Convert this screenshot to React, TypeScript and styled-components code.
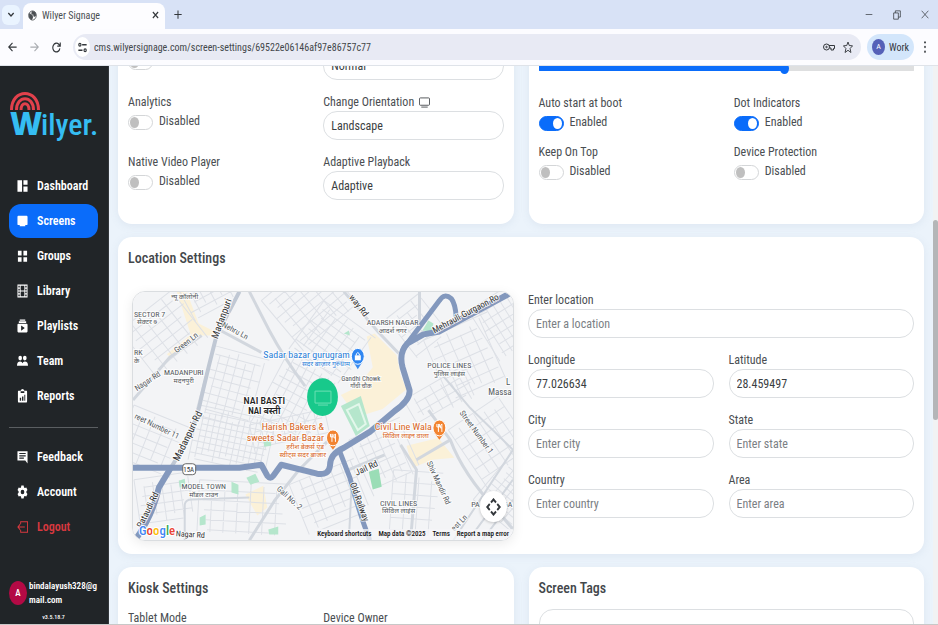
import React from "react";
import styled, { createGlobalStyle, css } from "styled-components";

const ui = `"Roboto Condensed", Nunito, Roboto, "Noto Sans", sans-serif`;
const blue = "#0a6cfa";

const Global = createGlobalStyle`
  * { box-sizing: border-box; }
  body { margin: 0; font-family: ${ui}; font-size: 12px; color: #4a4e52; background: #ebf3fb; }
  button, input, select { font: inherit; color: inherit; margin: 0; }
  a { color: inherit; text-decoration: none; }
`;

/* ---------- shell ---------- */
const Page = styled.div`
  display: flex;
  flex-direction: column;
  height: 100vh;
  overflow: hidden;
  border-bottom: 1px solid #c8c8c8;
`;
const Body = styled.div`
  display: flex;
  flex: 1;
  min-height: 0;
`;
const PlainButton = styled.button`
  display: inline-flex;
  align-items: center;
  justify-content: center;
  padding: 0;
  border: 0;
  background: none;
  color: #33373b;
`;

/* ---------- browser frame ---------- */
const TabStrip = styled.header`
  display: flex;
  align-items: center;
  height: 29px;
  flex: none;
  padding: 0 2px;
  background: #d8e2f6;
`;
const TabSearch = styled(PlainButton)`
  width: 18px;
  height: 20px;
  border-radius: 6px;
  background: #eaf4ff;
`;
const Tab = styled.div`
  display: flex;
  align-items: center;
  align-self: flex-end;
  gap: 5px;
  width: 142px;
  height: 26px;
  margin-left: 3px;
  padding: 0 6px 2px 5px;
  border-radius: 8px 8px 0 0;
  background: #fdfdff;
  font-size: 10px;
`;
const TabTitle = styled.span`
  flex: 1;
`;
const NewTab = styled(PlainButton)`
  width: 26px;
  height: 20px;
`;
const WindowButtons = styled.div`
  display: flex;
  gap: 13px;
  margin-left: auto;
  padding-right: 4px;
`;
const WindowButton = styled(PlainButton)`
  width: 15px;
  height: 16px;
`;
const Toolbar = styled.div`
  display: flex;
  align-items: center;
  height: 37px;
  flex: none;
  padding: 0 8px 0 4px;
  background: #fcfcff;
  border-bottom: 1px solid #dfe3e9;
`;
const ToolButton = styled(PlainButton)<{ $muted?: boolean }>`
  width: 16px;
  height: 20px;
  margin-right: 6px;
  color: ${(p) => (p.$muted ? "#a9acb1" : "#33373b")};
`;
const AddressBar = styled.div`
  display: flex;
  align-items: center;
  flex: 1;
  height: 26px;
  margin-left: 3px;
  padding: 0 8px 0 2px;
  border-radius: 13px;
  background: #e8eaf4;
`;
const SiteInfo = styled(PlainButton)`
  width: 15px;
  height: 20px;
  border-radius: 50%;
  background: #fff;
`;
const Url = styled.input`
  flex: 1;
  min-width: 0;
  padding: 0 4px;
  border: 0;
  background: none;
  font-size: 10px;
  color: #43474b;
`;
const BarIcons = styled.div`
  display: flex;
  gap: 8px;
`;
const Profile = styled(PlainButton)`
  gap: 4px;
  height: 26px;
  width: 47px;
  margin: 0 6px;
  border-radius: 13px;
  background: #d3e6fb;
  font-size: 10px;
`;
const ProfileDot = styled.span`
  width: 13px;
  height: 16px;
  border-radius: 50%;
  background: #5561b8;
  color: #fff;
  font-size: 8px;
  line-height: 16px;
`;

/* ---------- sidebar ---------- */
const Sidebar = styled.aside`
  display: flex;
  flex-direction: column;
  flex: none;
  width: 109px;
  padding: 24px 10px 0 9px;
  background: #212528;
  border-right: 1px solid #33373b;
  color: #fff;
`;
const Nav = styled.nav<{ $top?: boolean }>`
  display: flex;
  flex-direction: column;
  gap: 1px;
  margin-top: ${(p) => (p.$top ? 23 : 0)}px;
`;
const NavLink = styled.a<{ $active?: boolean; $danger?: boolean }>`
  display: flex;
  align-items: center;
  gap: 9px;
  height: 34px;
  padding-left: 8px;
  border-radius: 12px;
  font-weight: 600;
  color: ${(p) => (p.$danger ? "#d8383f" : "#fff")};
  background: ${(p) => (p.$active ? blue : "transparent")};
`;
const Divider = styled.hr`
  width: 100%;
  margin: 14px 0 12px;
  border: 0;
  border-top: 1px solid #5a5e61;
`;
const User = styled.div`
  display: flex;
  align-items: center;
  gap: 2px;
  margin-top: auto;
  font-size: 9px;
  font-weight: 600;
  line-height: 14px;
`;
const Avatar = styled.span`
  flex: none;
  width: 18px;
  height: 24px;
  border-radius: 50%;
  background: #b30a45;
  line-height: 24px;
  text-align: center;
`;
const Email = styled.span`
  flex: 1;
  min-width: 0;
  overflow-wrap: anywhere;
`;
const Version = styled.p`
  margin: 4px 0 1px;
  font-size: 6px;
  font-weight: 500;
  line-height: 12px;
  text-align: center;
`;

/* ---------- content ---------- */
const Main = styled.main`
  flex: 1;
  min-width: 0;
  overflow: hidden;
  padding: 0 9px;
`;
const Scrolled = styled.div`
  display: grid;
  grid-template-columns: 1fr 1fr;
  gap: 13px 15px;
  margin-top: -15px;
`;
const Card = styled.section<{ $wide?: boolean; $continued?: boolean }>`
  padding: 11px 10px 13px;
  border-radius: 14px;
  background: #fff;
  box-shadow: 0 2px 8px rgba(120, 150, 170, 0.12);
  ${(p) => p.$wide && css`grid-column: 1 / -1;`}
  ${(p) => p.$continued && css`padding-top: 0; padding-bottom: 24px; border-radius: 0 0 14px 14px;`}
`;
const Title = styled.h2<{ $space: number }>`
  margin: 0 0 ${(p) => p.$space}px;
  font-size: 14px;
  font-weight: 500;
  line-height: 20px;
  color: #43474b;
`;
const Fields = styled.div<{ $gap?: number }>`
  display: grid;
  grid-template-columns: 1fr 1fr;
  align-items: start;
  align-content: start;
  gap: ${(p) => p.$gap ?? 13}px 15px;
`;
const FieldBox = styled.div<{ $full?: boolean }>`
  min-width: 0;
  ${(p) => p.$full && css`grid-column: 1 / -1;`}
`;
const Label = styled.label`
  display: flex;
  align-items: center;
  gap: 5px;
  height: 18px;
  line-height: 18px;
`;
const control = css`
  display: block;
  width: 100%;
  height: 29px;
  padding: 0 7px;
  border: 1px solid #dcdfe2;
  border-radius: 14px;
  background: #fff;
  color: #3a3e42;
  appearance: none;
`;
const Select = styled.select`
  ${control}
`;
const Input = styled.input`
  ${control}
  &::placeholder { color: #7b8084; opacity: 1; }
`;
const SwitchRow = styled.label`
  display: flex;
  align-items: center;
  gap: 6px;
  height: 19px;
`;
const Switch = styled.input`
  appearance: none;
  flex: none;
  display: flex;
  align-items: center;
  width: 25px;
  height: 15px;
  margin-top: 4px;
  padding: 0 1px;
  border: 1px solid #d4d6d8;
  border-radius: 8px;
  background: #fff;
  &::before {
    content: "";
    width: 9px;
    height: 11px;
    border-radius: 50%;
    background: #bfbfbf;
  }
  &:checked {
    justify-content: flex-end;
    border-color: ${blue};
    background: ${blue};
  }
  &:checked::before { background: #fff; }
`;
const Range = styled.input`
  appearance: none;
  display: block;
  width: 100%;
  height: 12px;
  margin: 11px 0 20px;
  border-radius: 4px;
  background: linear-gradient(90deg, ${blue} 66%, #dedfe0 66%) center / 100% 5px no-repeat;
  &::-webkit-slider-thumb {
    appearance: none;
    width: 9px;
    height: 11px;
    border-radius: 50%;
    background: ${blue};
  }
`;
const Split = styled.div`
  display: grid;
  grid-template-columns: 1fr 1fr;
  gap: 14px;
`;
const ScrollTrack = styled.div`
  flex: none;
  width: 5px;
  padding-top: 154px;
  background: #f1f2f3;
`;
const ScrollThumb = styled.div`
  height: 200px;
  border-radius: 3px;
  background: #b4b6b8;
`;

/* ---------- map ---------- */
const MapFrame = styled.div`
  position: relative;
  height: 250px;
  margin-left: 4px;
  overflow: hidden;
  border: 1px solid #dadde0;
  border-radius: 13px;
  box-shadow: 0 3px 12px rgba(0, 0, 0, 0.08);
`;
const MapSvg = styled.svg`
  display: block;
  width: 100%;
  height: 100%;
`;
const MapFooter = styled.div`
  position: absolute;
  right: 0;
  bottom: 0;
  display: flex;
  gap: 7px;
  height: 11px;
  padding: 0 4px 0 2px;
  background: rgba(245, 246, 248, 0.75);
  font-size: 7px;
  font-weight: 500;
  line-height: 11px;
  color: #111;
`;
const Shortcut = styled(PlainButton)`
  color: #111;
`;
const CameraButton = styled(PlainButton)`
  position: absolute;
  right: 6px;
  bottom: 18px;
  width: 27px;
  height: 31px;
  border-radius: 50%;
  background: #fff;
  box-shadow: 0 1px 3px rgba(0, 0, 0, 0.2);
`;

/* ---------- icons ---------- */
const Glyph = ({ w = 11, h = 14, fill = false, sw = 2, children }: { w?: number; h?: number; fill?: boolean; sw?: number; children: React.ReactNode }) => (
  <svg width={w} height={h} viewBox="0 0 24 24" preserveAspectRatio="none" aria-hidden="true"
    fill={fill ? "currentColor" : "none"} stroke={fill ? "none" : "currentColor"} strokeWidth={sw}>
    {children}
  </svg>
);

const navIcons: Record<string, React.ReactNode> = {
  Dashboard: <Glyph fill><path d="M1 2h10v20H1zM14 2h9v8h-9zM14 13h9v9h-9z" /></Glyph>,
  Screens: <Glyph fill><path d="M3 3h18q2 0 2 2v12q0 2-2 2h-3v2H6v-2H3q-2 0-2-2V5q0-2 2-2z" /></Glyph>,
  Groups: <Glyph fill><path d="M2 3h8v8H2zM14 3h8v8h-8zM2 14h8v8H2zM14 14h8v8h-8z" /></Glyph>,
  Library: <Glyph sw={2}><path d="M2 2h20v20H2zM7 2v20M17 2v20M7 12h10M2 7h5M2 12h5M2 17h5M17 7h5M17 12h5M17 17h5" /></Glyph>,
  Playlists: <Glyph fill><path fillRule="evenodd" d="M6 1h12v2H6zM4 4h16v3H4zM3 8h18q2 0 2 2v11q0 2-2 2H3q-2 0-2-2V10q0-2 2-2zM9 11v9l8-4.500z" /></Glyph>,
  Team: <Glyph fill><circle cx="7" cy="7" r="4" /><circle cx="17" cy="7" r="4" /><path d="M0 20q0-7 7-7 4 0 5 3 1-3 5-3 7 0 7 7z" /></Glyph>,
  Reports: <Glyph fill><path fillRule="evenodd" d="M3 3h5q1-3 4-3t4 3h5q1 0 1 2v16q0 2-1 2H3q-1 0-1-2V5q0-2 1-2zM8 4v3h8V4zM6 15v5h3v-5zM11 13v7h3v-7zM16 10v10h2V10z" /></Glyph>,
  Feedback: <Glyph fill><path fillRule="evenodd" d="M1 2h22v21l-5-5H1zM5 5v2h14V5zM5 9v2h14V9zM5 13v2h10v-2z" /></Glyph>,
  Account: <Glyph fill><path fillRule="evenodd" d="M9.500 1h5l.8 3.200 2 1.100 3-1 2.500 4.400-2.300 2.200v2.200l2.300 2.200-2.500 4.400-3-1-2 1.100-.8 3.200h-5l-.8-3.200-2-1.100-3 1-2.500-4.400 2.300-2.200v-2.200L1.200 8.700l2.500-4.400 3 1 2-1.100zM12 8a4 4 0 1 0 0 8 4 4 0 0 0 0-8z" /></Glyph>,
  Logout: <Glyph sw={2}><path d="M8 7V3h15v18H8v-4M17 12H2M7 7l-5 5 5 5" /></Glyph>,
};

const Logo = () => (
  <svg width="90" height="56" viewBox="0 0 90 56" role="img" aria-label="Wilyer">
    <g fill="none" stroke="#e2414c" strokeWidth="3">
      <path d="M2.500 20C2.500 -2 29.500 -2 29.500 20" />
      <path d="M7.500 20C7.500 5 24.500 5 24.500 20" />
      <path d="M12 20C12 11.500 20 11.500 20 20" />
    </g>
    <text x="1" y="45" fontFamily="Open Sans" fontWeight="800" fontSize="31" fill="#35bdf2">W</text>
    <text x="32" y="45" fontFamily="Roboto Condensed" fontWeight="500" fontSize="30" fill="#35bdf2">ilyer.</text>
  </svg>
);

/* ---------- map drawing ---------- */
function hatch(x: number, y: number, w: number, h: number, angle: number, dx: number, dy: number) {
  let d = "";
  for (let i = 0; i <= w; i += dx) d += `M${i} ${(i * 7) % 11}V${h - ((i * 5) % 13)}`;
  for (let j = 0; j <= h; j += dy) d += `M${(j * 5) % 12} ${j}H${w - ((j * 3) % 17)}`;
  return <path key={`${x}-${y}`} d={d} transform={`translate(${x} ${y}) rotate(${angle})`} />;
}
const blocks: [number, number, number, number, number, number, number][] = [
  [120, 330, 70, 60, -38, 13, 9],
  [214, 345, 58, 74, 15, 9, 8],
  [200, 405, 80, 56, 12, 6, 6],
  [262, 300, 80, 66, -40, 12, 8],
  [290, 350, 60, 80, 28, 8, 9],
  [325, 300, 64, 60, 36, 10, 8],
  [388, 318, 40, 50, -38, 10, 8],
  [425, 340, 70, 74, -24, 12, 11],
  [470, 310, 60, 60, -32, 8, 9],
  [405, 400, 70, 34, -30, 10, 9],
  [350, 440, 56, 62, -24, 9, 11],
  [395, 470, 50, 64, 4, 13, 12],
  [450, 430, 62, 70, -34, 10, 12],
  [475, 500, 50, 50, -50, 6, 12],
  [134, 405, 60, 56, 22, 12, 9],
  [200, 480, 90, 52, 3, 13, 10],
  [290, 485, 70, 54, -22, 11, 9],
  [134, 480, 60, 50, -8, 9, 9],
  [180, 291, 50, 34, -28, 9, 8],
  [250, 425, 80, 30, -12, 11, 8],
];

type Place = { x: number; y: number; t: string; s?: number; a?: number; c?: string; w?: number; m?: "start" | "middle" | "end" };
const places: Place[] = [
  { x: 185, y: 298, t: "न्यू कॉलोनी", s: 7, m: "middle" },
  { x: 134, y: 316, t: "SECTOR 7" },
  { x: 137, y: 324, t: "सेक्टर ७", s: 7 },
  { x: 134, y: 355, t: "RK" },
  { x: 134, y: 363, t: "के", s: 7 },
  { x: 184, y: 375, t: "MADANPURI", m: "middle" },
  { x: 184, y: 383, t: "मदनपुरी", s: 7, m: "middle" },
  { x: 394, y: 325, t: "ADARSH NAGAR", m: "middle" },
  { x: 394, y: 333, t: "आदर्श नगर", s: 7, m: "middle" },
  { x: 451, y: 368, t: "POLICE LINES", m: "middle" },
  { x: 451, y: 376, t: "पुलिस लाइंस", s: 7, m: "middle" },
  { x: 508, y: 385, t: "L", s: 9 },
  { x: 490, y: 395, t: "Massa", s: 9 },
  { x: 265, y: 404, t: "NAI BASTI", s: 10, c: "#222", m: "middle", w: 500 },
  { x: 265, y: 414, t: "NAI बस्ती", s: 9, c: "#222", m: "middle", w: 600 },
  { x: 362, y: 381, t: "Gandhi Chowk", s: 7, m: "middle" },
  { x: 362, y: 388, t: "गाँधी चौक", s: 6, m: "middle" },
  { x: 204, y: 489, t: "MODEL TOWN", m: "middle" },
  { x: 204, y: 497, t: "मॉडल टाउन", s: 7, m: "middle" },
  { x: 400, y: 506, t: "CIVIL LINES", m: "middle" },
  { x: 400, y: 514, t: "सिविल लाइंस", s: 7, m: "middle" },
  { x: 473, y: 507, t: "PA" },
  { x: 505, y: 507, t: "GA" },
  { x: 351, y: 358, t: "Sadar bazar gurugram", s: 10, c: "#2a80d8", m: "end" },
  { x: 351, y: 366, t: "सदर बाज़ार गुरुग्राम", s: 7, c: "#2a80d8", m: "end" },
  { x: 325, y: 430, t: "Harish Bakers &", s: 10, c: "#d9651c", m: "end" },
  { x: 325, y: 441, t: "sweets Sadar Bazar", s: 10, c: "#d9651c", m: "end" },
  { x: 325, y: 449, t: "हरीश बेकर्स एंड", s: 7, c: "#d9651c", m: "end" },
  { x: 327, y: 457, t: "स्वीट्स सदर बाजार", s: 7, c: "#d9651c", m: "end" },
  { x: 376, y: 430, t: "Civil Line Wala", s: 10, c: "#d9651c" },
  { x: 384, y: 438, t: "सिविल लाइन वाला", s: 7, c: "#d9651c" },
  { x: 218, y: 339, t: "Madanpuri", a: -70, s: 10, c: "#333" },
  { x: 179, y: 462, t: "Madanpuri Rd", a: -64, s: 10, c: "#333" },
  { x: 177, y: 353, t: "Green Ln", a: -38 },
  { x: 222, y: 326, t: "Nehru Ln", a: 28 },
  { x: 350, y: 297, t: "way Rd", a: 52, s: 9, c: "#333" },
  { x: 137, y: 391, t: "Nagar Rd", a: -33 },
  { x: 134, y: 418, t: "reet Number 11", a: 26 },
  { x: 142, y: 529, t: "Pataudi Rd", a: -64, s: 9, c: "#333" },
  { x: 277, y: 490, t: "Gali No. 2", a: 42 },
  { x: 358, y: 476, t: "Jail Rd", a: -25, s: 9, c: "#333" },
  { x: 351, y: 484, t: "Old Railway", a: 70, s: 9, c: "#333" },
  { x: 436, y: 333, t: "Mehrauli-Gurgaon Ro", a: -28, s: 9, c: "#333" },
  { x: 461, y: 413, t: "Street Number 1", a: 54 },
  { x: 428, y: 463, t: "Shiv Mandir Rd", a: 65 },
  { x: 456, y: 532, t: "est Ln", a: -45 },
  { x: 176, y: 537, t: "Nagar Rd", a: 3, s: 8, c: "#333" },
];
const google: [string, string][] = [["G", "#4285f4"], ["o", "#ea4335"], ["o", "#fbbc05"], ["g", "#4285f4"], ["l", "#34a853"], ["e", "#ea4335"]];

const FoodPin = ({ x, y }: { x: number; y: number }) => (
  <g transform={`translate(${x} ${y})`}>
    <path d="M0 12L-5 5H5z" fill="#f28330" />
    <ellipse rx="6.500" ry="8" fill="#f28330" stroke="#fff" strokeWidth="1" />
    <path d="M-2.500 -4V-1M-1 -4V4M-2.500 -1H0V-4M2.500 4V-4Q.5 -3 1 0H2.500" stroke="#fff" strokeWidth="1" fill="none" />
  </g>
);

const StreetMap = () => (
  <MapSvg viewBox="133 291 382 250" preserveAspectRatio="xMidYMid slice" role="img" aria-label="Map of Sadar Bazar, Gurugram">
    <rect x="100" y="260" width="460" height="310" fill="#f3f4f6" />
    <g fill="#fbf1d8">
      <path d="M177 291h10l12 32 16 8-4 4-16 0-24 22-4-3 24-20z" />
      <path d="M368 336l8-3 22 22 4 20 6 14-24 20-26 8-16-22 16-8 16-20z" />
      <path d="M408 446l32-8 16 20-22 2-20 8z" />
      <path d="M246 495l18-9 4 22-10 8z" />
    </g>
    <g fill="none" stroke="#dde0e6" strokeWidth="1">
      {blocks.map((b) => hatch(...b))}
    </g>
    <g fill="#b5e6cc">
      <path d="M342 406l20-10 9 30-14 10z" />
      <path d="M370 472l10-3 3 18-9 3z" fill="#9addb6" />
      <path d="M424 330l6-10 5 3-2 8z" />
      <path d="M345 333l5-3 1 5z" />
      <path d="M247 478l9-4 4 8-9 3zM200 518l6-3 0 10-6 1zM264 441l7-2 1 7-7 1zM232 482l7 3v10l-7-2zM269 530l10-3v8h-9zM179 481l6-2 1 8-6 1z" />
    </g>
    <path d="M348 410l12-6 7 20-8 6z" fill="none" stroke="#e3f7eb" strokeWidth="2" />
    <g fill="none" stroke="#d2d7de" strokeWidth="3" strokeLinejoin="round">
      <path d="M250 291L270 330Q285 358 306 386M345 291L380 332 400 353M421 291V328M430 410L452 440Q465 475 500 512L515 530" />
      <path d="M133 400L170 357 202 335M221 330L262 352M386 455L350 470M402 445L418 470 412 541M418 460L452 440M250 541L276 500 300 470 330 440" />
      <path d="M440 370L472 408 515 450M455 541L515 450M185 541V505Q186 500 192 500L250 498" strokeWidth="2" />
      <path d="M470 541L515 480M350 541L353 480M484 541L515 500" strokeWidth="2" />
    </g>
    <path d="M240 291L217 335Q206 378 200 405T171 468" fill="none" stroke="#c0c8d4" strokeWidth="4" />
    <g fill="none" stroke="#8398bd" strokeLinejoin="round">
      <path d="M171 468L159 488Q153 516 135 541" strokeWidth="6" />
      <path d="M133 468H240L262 465 268 476Q271 480 274 476L282 465 318 474Q330 476 331 466 331 454 345 448L371 432 396 411Q412 400 411 390L404 367Q400 352 409 343L425 334 441 331 515 291" strokeWidth="6" />
      <path d="M405 348L441 300Q446 292 453 298 457 303 458 317M341 452L351 478Q360 512 371 541" strokeWidth="5" />
    </g>
    <g fontFamily='"Roboto Condensed", "Noto Sans Devanagari", "Noto Sans", sans-serif' stroke="#fff" strokeOpacity="0.8" strokeWidth="2" paintOrder="stroke">
      {places.map((p, i) => (
        <text key={i} fontSize={p.s ?? 8} fill={p.c ?? "#555a60"} fontWeight={p.w ?? 400} textAnchor={p.m ?? "start"}
          transform={`translate(${p.x} ${p.y}) rotate(${p.a ?? 0})`}>{p.t}</text>
      ))}
    </g>
    <rect x="183" y="464" width="13" height="11" rx="3" fill="#fff" stroke="#666" />
    <text x="189" y="472" fontSize="7" fontFamily="Roboto Condensed" textAnchor="middle" fill="#333">15A</text>
    <path d="M359 369l-5-8h10z" fill="#3a8bf0" />
    <ellipse cx="359" cy="356" rx="6.500" ry="8" fill="#2f86f2" stroke="#fff" />
    <rect x="356" y="355" width="6" height="5" fill="#fff" />
    <path d="M357.500 355v-1.500q1.500-2.500 3 0v1.500" fill="none" stroke="#fff" />
    <FoodPin x={334} y={438} />
    <FoodPin x={441} y={428} />
    <ellipse cx="323.500" cy="397" rx="15.500" ry="19" fill="#18c98b" />
    <path d="M316 391h16v12h-16zM319 405h10" fill="none" stroke="#6de0b4" strokeWidth="1" />
    <text x="139" y="536" fontSize="13" fontWeight="500" fontFamily="Roboto Condensed" stroke="#fff" strokeWidth="2" paintOrder="stroke">
      {google.map(([ch, fill], i) => <tspan key={i} fill={fill}>{ch}</tspan>)}
    </text>
  </MapSvg>
);

/* ---------- parts ---------- */
const slug = (s: string) => s.toLowerCase().replace(/\W+/g, "-");

function Toggle({ label, on }: { label: string; on?: boolean }) {
  return (
    <FieldBox>
      <Label htmlFor={slug(label)}>{label}</Label>
      <SwitchRow>
        <Switch type="checkbox" role="switch" id={slug(label)} defaultChecked={on} />
        {on ? "Enabled" : "Disabled"}
      </SwitchRow>
    </FieldBox>
  );
}
function Choice({ label, value, icon }: { label: string; value: string; icon?: React.ReactNode }) {
  return (
    <FieldBox>
      <Label htmlFor={slug(label)}>{label}{icon}</Label>
      <Select id={slug(label)} defaultValue={value}><option>{value}</option></Select>
    </FieldBox>
  );
}
function TextField({ label, value, hint, full }: { label: string; value?: string; hint?: string; full?: boolean }) {
  return (
    <FieldBox $full={full}>
      <Label htmlFor={slug(label)}>{label}</Label>
      <Input id={slug(label)} defaultValue={value} placeholder={hint} />
    </FieldBox>
  );
}

export default function App() {
  return (
    <Page>
      <Global />
      <TabStrip>
        <TabSearch aria-label="Search tabs"><Glyph w={8} h={9} sw={4}><path d="M4 8l8 8 8-8" /></Glyph></TabSearch>
        <Tab>
          <Glyph w={9} h={11} sw={2}><circle cx="12" cy="12" r="10" /><path fill="currentColor" d="M3 8l6 2 4 4-3 7-6-4zM11 3l8 2 2 7-4 2-3-4-4-2z" /></Glyph>
          <TabTitle>Wilyer Signage</TabTitle>
          <PlainButton aria-label="Close tab"><Glyph w={7} h={8} sw={4}><path d="M3 3l18 18M21 3L3 21" /></Glyph></PlainButton>
        </Tab>
        <NewTab aria-label="New tab"><Glyph w={8} h={9} sw={3}><path d="M12 1v22M1 12h22" /></Glyph></NewTab>
        <WindowButtons>
          <WindowButton aria-label="Minimize"><Glyph w={8} h={9}><path d="M2 12h20" /></Glyph></WindowButton>
          <WindowButton aria-label="Restore"><Glyph w={8} h={10} sw={2}><path d="M2 7h14v15H2zM7 7V2h15v15h-6" /></Glyph></WindowButton>
          <WindowButton aria-label="Close"><Glyph w={8} h={9} sw={2}><path d="M2 2l20 20M22 2L2 22" /></Glyph></WindowButton>
        </WindowButtons>
      </TabStrip>
      <Toolbar>
        <ToolButton aria-label="Back"><Glyph w={9} h={10} sw={3}><path d="M23 12H2M12 2L2 12l10 10" /></Glyph></ToolButton>
        <ToolButton aria-label="Forward" $muted><Glyph w={9} h={10} sw={3}><path d="M1 12h21M12 2l10 10-10 10" /></Glyph></ToolButton>
        <ToolButton aria-label="Reload"><Glyph w={9} h={11} sw={3}><path d="M21 14a9.500 9.500 0 1 1-3-9l4 4M22 1v8h-8" /></Glyph></ToolButton>
        <AddressBar>
          <SiteInfo aria-label="Site information"><Glyph w={9} h={11} sw={3}><circle cx="5" cy="6" r="3" /><path d="M11 6h12M1 18h11" /><circle cx="19" cy="18" r="3" /></Glyph></SiteInfo>
          <Url aria-label="Address" defaultValue="cms.wilyersignage.com/screen-settings/69522e06146af97e86757c77" />
          <BarIcons>
            <PlainButton aria-label="Passwords"><Glyph w={12} h={12} sw={2}><circle cx="7" cy="12" r="6" /><circle cx="7" cy="12" r="1.500" /><path d="M12 9h11v6h-2v3h-5v-4h-3" /></Glyph></PlainButton>
            <PlainButton aria-label="Bookmark"><Glyph w={10} h={12} sw={2}><path d="M12 2l3 7 8 .6-6 5.400 2 8-7-4.500L5 23l2-8-6-5.400L9 9z" /></Glyph></PlainButton>
          </BarIcons>
        </AddressBar>
        <Profile><ProfileDot>A</ProfileDot>Work</Profile>
        <PlainButton aria-label="Menu"><Glyph fill w={10} h={14}><circle cx="12" cy="4" r="2" /><circle cx="12" cy="12" r="2" /><circle cx="12" cy="20" r="2" /></Glyph></PlainButton>
      </Toolbar>
      <Body>
        <Sidebar>
          <Logo />
          <Nav $top>
            {["Dashboard", "Screens", "Groups", "Library", "Playlists", "Team", "Reports"].map((n) => (
              <NavLink key={n} href="#" $active={n === "Screens"}>{navIcons[n]}{n}</NavLink>
            ))}
          </Nav>
          <Divider />
          <Nav>
            {["Feedback", "Account", "Logout"].map((n) => (
              <NavLink key={n} href="#" $danger={n === "Logout"}>{navIcons[n]}{n}</NavLink>
            ))}
          </Nav>
          <User><Avatar>A</Avatar><Email>bindalayush328@gmail.com</Email></User>
          <Version>v3.5.18.7</Version>
        </Sidebar>
        <Main>
          <Scrolled>
            <Card $continued>
              <Fields>
                <SwitchRow><Switch type="checkbox" role="switch" aria-label="Setting" /></SwitchRow>
                <Select aria-label="Mode" defaultValue="Normal"><option>Normal</option></Select>
                <Toggle label="Analytics" />
                <Choice label="Change Orientation" value="Landscape" icon={<Glyph w={11} h={11} sw={2}><path d="M3 2h18q2 0 2 2v12q0 2-2 2H3q-2 0-2-2V4q0-2 2-2zM5 22h14" /></Glyph>} />
                <Toggle label="Native Video Player" />
                <Choice label="Adaptive Playback" value="Adaptive" />
              </Fields>
            </Card>
            <Card $continued>
              <Range type="range" aria-label="Level" defaultValue={66} />
              <Fields $gap={12}>
                <Toggle label="Auto start at boot" on />
                <Toggle label="Dot Indicators" on />
                <Toggle label="Keep On Top" />
                <Toggle label="Device Protection" />
              </Fields>
            </Card>
            <Card $wide>
              <Title $space={23}>Location Settings</Title>
              <Split>
                <MapFrame>
                  <StreetMap />
                  <CameraButton aria-label="Map camera controls">
                    <Glyph w={15} h={18} sw={3}><path d="M8 6l4-4 4 4M8 18l4 4 4-4M6 8l-4 4 4 4M18 8l4 4-4 4" /></Glyph>
                  </CameraButton>
                  <MapFooter>
                    <Shortcut>Keyboard shortcuts</Shortcut>
                    <span>Map data ©2025</span>
                    <a href="#">Terms</a>
                    <a href="#">Report a map error</a>
                  </MapFooter>
                </MapFrame>
                <Fields>
                  <TextField label="Enter location" hint="Enter a location" full />
                  <TextField label="Longitude" value="77.026634" />
                  <TextField label="Latitude" value="28.459497" />
                  <TextField label="City" hint="Enter city" />
                  <TextField label="State" hint="Enter state" />
                  <TextField label="Country" hint="Enter country" />
                  <TextField label="Area" hint="Enter area" />
                </Fields>
              </Split>
            </Card>
            <Card>
              <Title $space={11}>Kiosk Settings</Title>
              <Fields>
                <Toggle label="Tablet Mode" />
                <Toggle label="Device Owner" />
              </Fields>
            </Card>
            <Card>
              <Title $space={11}>Screen Tags</Title>
              <Input aria-label="Screen Tags" />
            </Card>
          </Scrolled>
        </Main>
        <ScrollTrack><ScrollThumb /></ScrollTrack>
      </Body>
    </Page>
  );
}
